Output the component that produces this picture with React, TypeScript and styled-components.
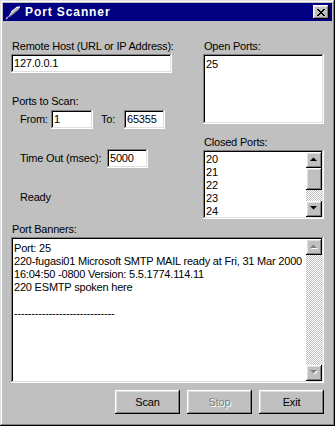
import styled, { createGlobalStyle } from "styled-components";

const GlobalStyle = createGlobalStyle`
  html, body {
    margin: 0;
    padding: 0;
    background: #c0c0c0;
  }
  body {
    font-family: "Liberation Sans", Arial, sans-serif;
    font-size: 11px;
    letter-spacing: -0.2px;
    color: #000;
  }
`;

const raised = `
  box-shadow: inset -1px -1px #000, inset 1px 1px #fff,
    inset -2px -2px #808080, inset 2px 2px #dfdfdf;
`;

const sunken = `
  box-shadow: inset -1px -1px #fff, inset 1px 1px #808080,
    inset -2px -2px #dfdfdf, inset 2px 2px #000;
`;

const Window = styled.div`
  box-sizing: border-box;
  width: 335px;
  height: 426px;
  padding: 3px;
  background: #c0c0c0;
  box-shadow: inset -1px -1px #000, inset 1px 1px #dfdfdf,
    inset -2px -2px #808080, inset 2px 2px #fff;
  display: flex;
  flex-direction: column;
`;

const TitleBar = styled.div`
  height: 18px;
  background: #000080;
  display: flex;
  align-items: center;
  padding: 0 3px 0 2px;
`;

const TitleText = styled.span`
  flex: 1;
  margin-left: 4px;
  color: #fff;
  font-weight: bold;
  font-size: 12px;
  letter-spacing: 0.9px;
  line-height: 18px;
`;

const CloseButton = styled.div`
  width: 16px;
  height: 14px;
  background: #c0c0c0;
  ${raised}
  display: flex;
  align-items: center;
  justify-content: center;
`;

const Body = styled.div`
  padding: 0 8px;
  display: flex;
  flex-direction: column;
`;

const Upper = styled.div`
  margin-top: 19px;
  display: grid;
  grid-template-columns: 161px 121px;
  justify-content: space-between;
`;

const Column = styled.div`
  display: flex;
  flex-direction: column;
`;

const Label = styled.div<{ $top?: number; $indent?: number }>`
  line-height: 13px;
  height: 13px;
  white-space: nowrap;
  margin-top: ${(p) => p.$top ?? 0}px;
  padding-left: ${(p) => p.$indent ?? 1}px;
`;

const Field = styled.div<{ $w?: number }>`
  box-sizing: border-box;
  width: ${(p) => (p.$w ? `${p.$w}px` : "100%")};
  height: 19px;
  margin-top: 1px;
  background: #fff;
  ${sunken}
  padding: 2px 3px 0;
  line-height: 15px;
`;

const Row = styled.div<{ $top: number }>`
  display: flex;
  align-items: center;
  margin-top: ${(p) => p.$top}px;
  padding-left: 9px;
`;

const Caption = styled.span<{ $w: number; $gap?: number }>`
  width: ${(p) => p.$w}px;
  margin-left: ${(p) => p.$gap ?? 0}px;
  flex-shrink: 0;
  line-height: 13px;
`;

const RowField = styled(Field)`
  margin-top: 0;
`;

const ListBox = styled.div<{ $h: number }>`
  box-sizing: border-box;
  height: ${(p) => p.$h}px;
  margin-top: 1px;
  background: #fff;
  ${sunken}
  padding: 2px;
  display: flex;
`;

const ListItems = styled.div<{ $pad: number }>`
  flex: 1;
  padding: ${(p) => p.$pad}px 1px 0;
  line-height: 13px;
  overflow: hidden;
`;

const ScrollBar = styled.div`
  width: 16px;
  display: flex;
  flex-direction: column;
`;

const ArrowButton = styled.div`
  width: 16px;
  height: 16px;
  flex-shrink: 0;
  background: #c0c0c0;
  ${raised}
  display: flex;
  align-items: center;
  justify-content: center;
`;

const Thumb = styled.div<{ $h: number }>`
  height: ${(p) => p.$h}px;
  flex-shrink: 0;
  background: #c0c0c0;
  ${raised}
`;

const Track = styled.div`
  flex: 1;
  background: repeating-conic-gradient(#fff 0 25%, #c0c0c0 0 50%) 0 0 / 2px
    2px;
`;

const BannerText = styled.div`
  flex: 1;
  padding: 3px 1px 0;
  line-height: 13px;
  white-space: pre;
  overflow: hidden;
`;

const ButtonRow = styled.div`
  margin-top: 7px;
  display: flex;
  justify-content: flex-end;
  gap: 7px;
`;

const Button = styled.div<{ $disabled?: boolean }>`
  width: 65px;
  height: 24px;
  background: #c0c0c0;
  ${raised}
  display: flex;
  align-items: center;
  justify-content: center;
  line-height: 13px;
  color: ${(p) => (p.$disabled ? "#808080" : "#000")};
  text-shadow: ${(p) => (p.$disabled ? "1px 1px #fff" : "none")};
`;

function Arrow({ up, disabled }: { up?: boolean; disabled?: boolean }) {
  const pts = up ? "0,4 7,4 3.5,0.5" : "0,0 7,0 3.5,3.5";
  return (
    <svg width="8" height="6" viewBox="0 0 8 6" style={{ overflow: "visible" }}>
      {disabled && <polygon points={pts} fill="#fff" transform="translate(1,1)" />}
      <polygon points={pts} fill={disabled ? "#808080" : "#000"} />
    </svg>
  );
}

function AppIcon() {
  return (
    <svg width="16" height="16" viewBox="0 0 16 16">
      <path d="M3 13 L6 8 L12 3 L15 3 L14 5 L8 10 L4 13 Z" fill="#c0c0c0" />
      <path d="M6 8 L12 3 L15 3" stroke="#fff" strokeWidth="1" fill="none" />
      <path d="M14 5 L8 10 L4 13" stroke="#808080" strokeWidth="1" fill="none" />
      <path d="M3 13 L1 15" stroke="#c0c0c0" strokeWidth="1.2" />
    </svg>
  );
}

const banner = `Port: 25
220-fugasi01 Microsoft SMTP MAIL ready at Fri, 31 Mar 2000
16:04:50 -0800 Version: 5.5.1774.114.11
220 ESMTP spoken here

-----------------------------`;

export default function App() {
  return (
    <>
      <GlobalStyle />
      <Window>
        <TitleBar>
          <AppIcon />
          <TitleText>Port Scanner</TitleText>
          <CloseButton>
            <svg width="8" height="7" viewBox="0 0 8 7">
              <path
                d="M0 0h2v1h1v1h2V1h1V0h2v1H7v1H6v1H5v1h1v1h1v1h1v1H6V6H5V5H3v1H2v1H0V6h1V5h1V4h1V3H2V2H1V1H0z"
                fill="#000"
              />
            </svg>
          </CloseButton>
        </TitleBar>
        <Body>
          <Upper>
            <Column>
              <Label>Remote Host (URL or IP Address):</Label>
              <Field>127.0.0.1</Field>
              <Label $top={22}>Ports to Scan:</Label>
              <Row $top={2}>
                <Caption $w={31}>From:</Caption>
                <RowField $w={42}>1</RowField>
                <Caption $w={23} $gap={8}>
                  To:
                </Caption>
                <RowField $w={41}>65355</RowField>
              </Row>
              <Row $top={20}>
                <Caption $w={87}>Time Out (msec):</Caption>
                <RowField $w={41}>5000</RowField>
              </Row>
              <Label $top={23} $indent={9}>
                Ready
              </Label>
            </Column>
            <Column>
              <Label>Open Ports:</Label>
              <ListBox $h={70}>
                <ListItems $pad={2}>25</ListItems>
              </ListBox>
              <Label $top={12}>Closed Ports:</Label>
              <ListBox $h={69}>
                <ListItems $pad={1}>
                  {[20, 21, 22, 23, 24].map((n) => (
                    <div key={n}>{n}</div>
                  ))}
                </ListItems>
                <ScrollBar>
                  <ArrowButton>
                    <Arrow up />
                  </ArrowButton>
                  <Thumb $h={22} />
                  <Track />
                  <ArrowButton>
                    <Arrow />
                  </ArrowButton>
                </ScrollBar>
              </ListBox>
            </Column>
          </Upper>
          <Label $top={4}>Port Banners:</Label>
          <ListBox $h={146}>
            <BannerText>{banner}</BannerText>
            <ScrollBar>
              <ArrowButton>
                <Arrow up disabled />
              </ArrowButton>
              <Track />
              <ArrowButton>
                <Arrow disabled />
              </ArrowButton>
            </ScrollBar>
          </ListBox>
          <ButtonRow>
            <Button>Scan</Button>
            <Button $disabled>Stop</Button>
            <Button>Exit</Button>
          </ButtonRow>
        </Body>
      </Window>
    </>
  );
}
